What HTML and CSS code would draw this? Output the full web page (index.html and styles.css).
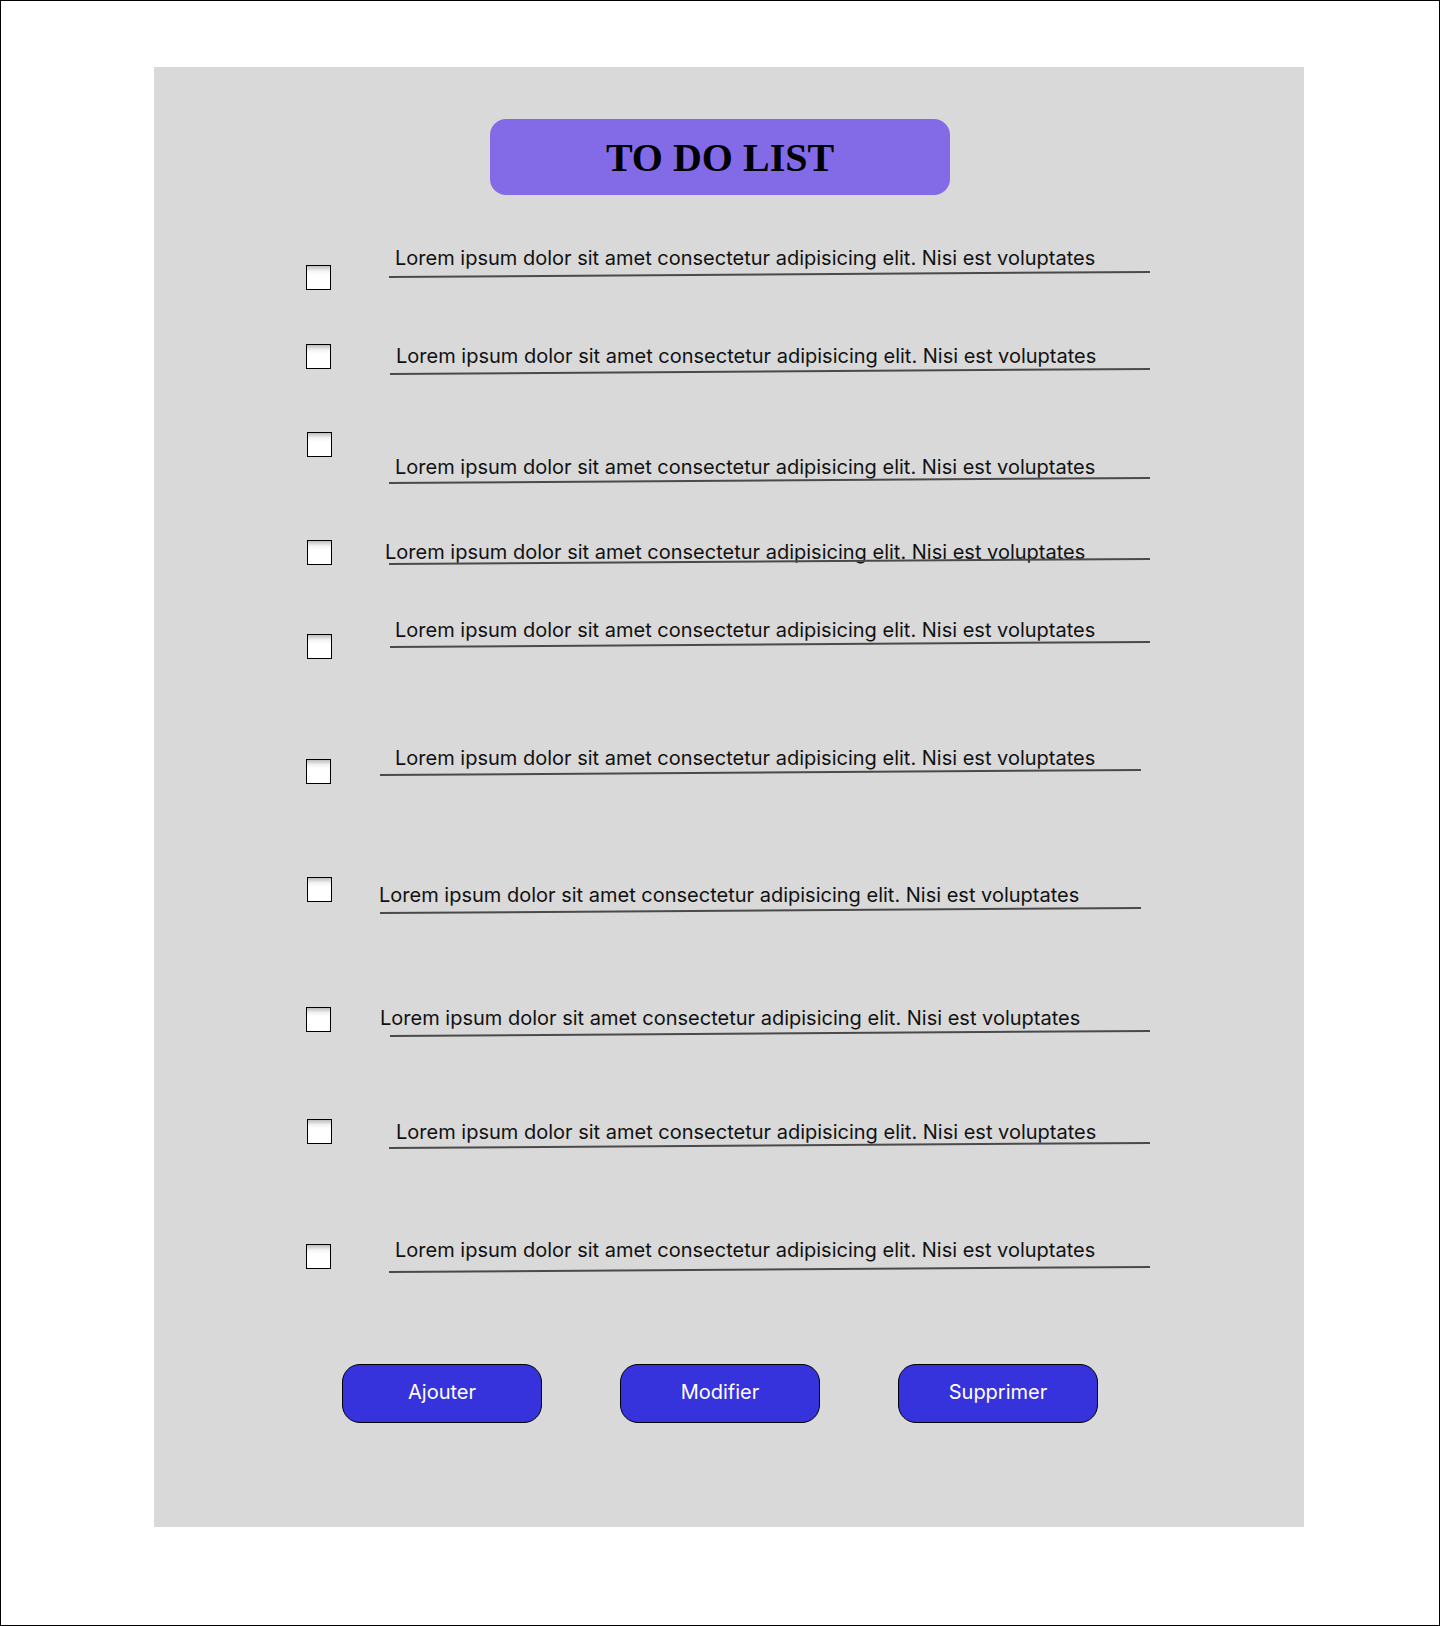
FILE: index.html
```html
<!DOCTYPE html>
<html lang="fr">
<head>
<meta charset="utf-8">
<title>To Do List</title>
<link rel="stylesheet" href="styles.css">
</head>
<body>
<div class="frame">
  <main class="panel">
    <h1 class="title">TO DO LIST</h1>
    <ul class="list">
      <li class="row r1"><span class="box"></span><div class="item"><p class="txt">Lorem ipsum dolor sit amet consectetur adipisicing elit. Nisi est voluptates</p><div class="rule"></div></div></li>
      <li class="row r2"><span class="box"></span><div class="item"><p class="txt">Lorem ipsum dolor sit amet consectetur adipisicing elit. Nisi est voluptates</p><div class="rule"></div></div></li>
      <li class="row r3"><span class="box"></span><div class="item"><p class="txt">Lorem ipsum dolor sit amet consectetur adipisicing elit. Nisi est voluptates</p><div class="rule"></div></div></li>
      <li class="row r4"><span class="box"></span><div class="item"><p class="txt">Lorem ipsum dolor sit amet consectetur adipisicing elit. Nisi est voluptates</p><div class="rule"></div></div></li>
      <li class="row r5"><span class="box"></span><div class="item"><p class="txt">Lorem ipsum dolor sit amet consectetur adipisicing elit. Nisi est voluptates</p><div class="rule"></div></div></li>
      <li class="row r6"><span class="box"></span><div class="item"><p class="txt">Lorem ipsum dolor sit amet consectetur adipisicing elit. Nisi est voluptates</p><div class="rule"></div></div></li>
      <li class="row r7"><span class="box"></span><div class="item"><p class="txt">Lorem ipsum dolor sit amet consectetur adipisicing elit. Nisi est voluptates</p><div class="rule"></div></div></li>
      <li class="row r8"><span class="box"></span><div class="item"><p class="txt">Lorem ipsum dolor sit amet consectetur adipisicing elit. Nisi est voluptates</p><div class="rule"></div></div></li>
      <li class="row r9"><span class="box"></span><div class="item"><p class="txt">Lorem ipsum dolor sit amet consectetur adipisicing elit. Nisi est voluptates</p><div class="rule"></div></div></li>
      <li class="row r10"><span class="box"></span><div class="item"><p class="txt">Lorem ipsum dolor sit amet consectetur adipisicing elit. Nisi est voluptates</p><div class="rule"></div></div></li>
    </ul>
    <div class="actions">
      <button class="btn" type="button">Ajouter</button>
      <button class="btn" type="button">Modifier</button>
      <button class="btn" type="button">Supprimer</button>
    </div>
  </main>
</div>
</body>
</html>
```
FILE: styles.css
```css
* { box-sizing: border-box; }

html, body {
  margin: 0;
  padding: 0;
  background: #ffffff;
}

.frame {
  width: 1440px;
  height: 1626px;
  border: 1px solid #000;
  padding: 66px 0 0 153px;
  font-family: Inter, "Noto Sans", sans-serif;
}

.panel {
  width: 1150px;
  height: 1460px;
  background: #d9d9d9;
  padding-top: 52px;
}

.title {
  margin: 0 0 0 336px;
  width: 460px;
  height: 76px;
  border-radius: 16px;
  background: #836be8;
  display: flex;
  align-items: center;
  justify-content: center;
  font-family: "Liberation Serif", "Times New Roman", serif;
  font-weight: 700;
  font-size: 40px;
  color: #000;
}

.list {
  list-style: none;
  margin: 52px 0 0 0;
  padding: 0;
}

.row {
  --h: 100px;
  --cby: 0px;
  --ty: 0px;
  --cbx: 152px;
  --ll: 235px;
  --lw: 761px;
  --dx: 6px;
  --gap: 5px;
  display: flex;
  align-items: flex-start;
  height: var(--h);
}

.r1  { --h: 97px;  --cby: 18px; --ty: 0px;  --cbx: 152px; --ll: 235px; --dx: 6px;  --gap: 6px; }
.r2  { --h: 88px;  --cby: 0px;  --ty: 1px;  --cbx: 152px; --ll: 236px; --dx: 6px;  --gap: 5px; --lw: 760px; }
.r3  { --h: 108px; --cby: 0px;  --ty: 24px; --cbx: 153px; --ll: 235px; --dx: 6px;  --gap: 3px; }
.r4  { --h: 79px;  --cby: 0px;  --ty: 1px;  --cbx: 153px; --ll: 235px; --dx: -4px; --gap: -1px; }
.r5  { --h: 128px; --cby: 15px; --ty: 0px;  --cbx: 153px; --ll: 236px; --dx: 5px;  --gap: 4px; --lw: 760px; }
.r6  { --h: 130px; --cby: 12px; --ty: 0px;  --cbx: 152px; --ll: 226px; --dx: 15px; --gap: 4px; }
.r7  { --h: 130px; --cby: 0px;  --ty: 7px;  --cbx: 153px; --ll: 226px; --dx: -1px; --gap: 5px; }
.r8  { --h: 112px; --cby: 0px;  --ty: 0px;  --cbx: 152px; --ll: 236px; --dx: -10px; --gap: 5px; --lw: 760px; }
.r9  { --h: 120px; --cby: 0px;  --ty: 2px;  --cbx: 153px; --ll: 235px; --dx: 7px;  --gap: 3px; }
.r10 { --h: 125px; --cby: 5px;  --ty: 0px;  --cbx: 152px; --ll: 235px; --dx: 6px;  --gap: 9px; }

.box {
  flex: none;
  width: 25px;
  height: 25px;
  margin-left: var(--cbx);
  margin-top: var(--cby);
  border: 1px solid #000;
  background: linear-gradient(#bdbdbd 0px, #f4f4f4 5px, #ffffff 9px);
}

.item {
  flex: none;
  width: var(--lw);
  margin-left: calc(var(--ll) - var(--cbx) - 25px);
  margin-top: var(--ty);
}

.txt {
  margin: 0 0 0 var(--dx);
  font-family: Inter, "Noto Sans", sans-serif;
  font-size: 20px;
  line-height: 23px;
  color: #111;
  white-space: nowrap;
}

.rule {
  margin-top: var(--gap);
  height: 2px;
  background: #4a4a4a;
  transform-origin: left center;
  transform: rotate(-0.38deg);
}

.actions {
  display: flex;
  gap: 78px;
  padding-left: 188px;
}

.btn {
  width: 200px;
  height: 59px;
  border: 1px solid #000;
  border-radius: 18px;
  background: #3632dc;
  color: #fff;
  font-family: Inter, "Noto Sans", sans-serif;
  font-size: 20px;
  font-weight: 400;
  padding: 0 0 4px 0;
}
```
